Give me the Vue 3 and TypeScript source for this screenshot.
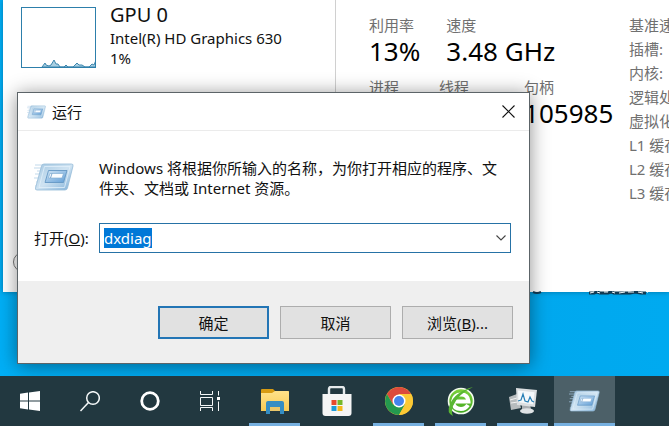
<script setup lang="ts">
import { onMounted, ref } from 'vue'

interface Stat {
  label: string
  value: string
}

const topStats: Stat[] = [
  { label: '利用率', value: '13%' },
  { label: '速度', value: '3.48 GHz' },
]
const lowerStats: Stat[] = [
  { label: '进程', value: '' },
  { label: '线程', value: '' },
  { label: '句柄', value: '105985' },
]
const details: string[] = ['基准速度:', '插槽:', '内核:', '逻辑处理器:', '虚拟化:', 'L1 缓存:', 'L2 缓存:', 'L3 缓存:']

const command = ref('dxdiag')
const field = ref<HTMLInputElement | null>(null)

onMounted(() => {
  field.value?.focus()
  field.value?.select()
})
</script>

<template>
  <div class="desktop">
    <svg class="defs" width="0" height="0" aria-hidden="true">
      <defs>
        <linearGradient id="run-face" x1="0" y1="0" x2="1" y2="1">
          <stop offset="0" stop-color="#a5c8e2" />
          <stop offset="0.5" stop-color="#cfe3f2" />
          <stop offset="1" stop-color="#7fb0d8" />
        </linearGradient>
        <linearGradient id="run-inner" x1="0" y1="0" x2="1" y2="1">
          <stop offset="0" stop-color="#d4e7f6" />
          <stop offset="1" stop-color="#5f9dd6" />
        </linearGradient>
        <linearGradient id="folder" x1="0" y1="0" x2="0" y2="1">
          <stop offset="0" stop-color="#ffe28a" />
          <stop offset="1" stop-color="#f8cb55" />
        </linearGradient>
        <linearGradient id="leaf" x1="0" y1="0" x2="0" y2="1">
          <stop offset="0" stop-color="#7fd43c" />
          <stop offset="1" stop-color="#3fa51f" />
        </linearGradient>
        <symbol id="run-icon" viewBox="0 0 40 28">
          <path d="M1 2h14M0 5h12M3 8h9M1 11h9M0 15h8M2 19h6M1 23h5" stroke="#a9cbe6" stroke-width="1.200" opacity=".7" />
          <path d="M10 1h27.500q2 0 1.500 2l-5.500 22q-.5 2-2.500 2H3q-2 0-1.500-2l6-22Q8 1 10 1z" fill="url(#run-face)" stroke="#96bbd8" stroke-width=".8" />
          <path d="M10.500 3.500H36l-5.500 21H5z" fill="none" stroke="#e2f0fa" stroke-width=".8" />
          <path d="M14.500 7.500H33l-3.500 12H11z" fill="url(#run-inner)" stroke="#6497c4" stroke-width=".9" />
          <path d="M16 10.500h13.500L28 15H14.500z" fill="#fafdff" stroke="#7aa7cf" stroke-width=".6" />
          <path d="M18 10.500L16.500 15" stroke="#6497c4" stroke-width=".8" />
        </symbol>
      </defs>
    </svg>

    <main class="workspace">
      <svg class="icon-label first-label" viewBox="0 0 12 5" aria-hidden="true">
        <path d="M2 1q4 2 8 0" fill="none" stroke="#123a52" stroke-width="2" />
      </svg>
      <svg class="icon-label second-label" viewBox="0 0 60 5" aria-hidden="true">
        <path d="M1 2h5l3-1 3 1h8l3-1 3 1h16l5-1 6 1h5" fill="none" stroke="#123a52" stroke-width="3" />
        <path d="M2 2l4-1m3 0l3 1m4-1h4m4 0l3 1m4 0l6-1m3 0h6m4 0l5 1m4-1l3 1" fill="none" stroke="#f2f8fb" />
      </svg>

      <section class="monitor" aria-label="GPU 0">
        <aside class="side">
          <svg class="graph" viewBox="0 0 75 61" aria-hidden="true">
            <path d="M21 60l3-4 1 2 3 1 2-1 3-5 2 4h2l2 3h4l2-2 2 2h5l4-4 2 2h3l3 2h4l3-3 2 1 2-5v7z" fill="#a9cfe2" stroke="#3e87ae" />
            <rect x=".5" y=".5" width="74" height="60" fill="none" stroke="#2d7fab" />
          </svg>
          <div class="gpu">
            <h2>GPU 0</h2>
            <p>Intel(R) HD Graphics 630</p>
            <p>1%</p>
          </div>
          <span class="fewer"></span>
        </aside>
        <div class="stats">
          <dl class="row top">
            <div v-for="s in topStats" :key="s.label">
              <dt>{{ s.label }}</dt>
              <dd>{{ s.value }}</dd>
            </div>
          </dl>
          <dl class="row lower">
            <div v-for="s in lowerStats" :key="s.label">
              <dt>{{ s.label }}</dt>
              <dd>{{ s.value }}</dd>
            </div>
          </dl>
        </div>
        <ul class="details">
          <li v-for="d in details" :key="d">{{ d }}</li>
        </ul>
      </section>

      <form class="dialog" role="dialog" aria-labelledby="run-title" @submit.prevent>
        <header class="titlebar">
          <svg class="small-run" aria-hidden="true"><use href="#run-icon" /></svg>
          <h1 id="run-title">运行</h1>
          <button type="button" class="close" aria-label="关闭">
            <svg viewBox="0 0 13 13" aria-hidden="true"><path d="M.5.5l12 12M12.500.5l-12 12" stroke="#111" stroke-width="1.100" /></svg>
          </button>
        </header>
        <div class="content">
          <div class="message">
            <svg class="large-run" aria-hidden="true"><use href="#run-icon" /></svg>
            <p>Windows 将根据你所输入的名称，为你打开相应的程序、文件夹、文档或 Internet 资源。</p>
          </div>
          <div class="entry">
            <label for="command">打开(<u>O</u>):</label>
            <div class="combo">
              <input id="command" ref="field" v-model="command" type="text" autocomplete="off" spellcheck="false" />
              <button type="button" aria-label="历史记录">
                <svg viewBox="0 0 10 6" aria-hidden="true"><path d="M.5.5L5 5 9.500.5" fill="none" stroke="#444" stroke-width="1.100" /></svg>
              </button>
            </div>
          </div>
        </div>
        <footer class="actions">
          <button type="submit" class="primary">确定</button>
          <button type="button">取消</button>
          <button type="button">浏览(<u>B</u>)...</button>
        </footer>
      </form>
    </main>

    <nav class="taskbar" aria-label="任务栏">
      <div class="system">
        <button type="button" aria-label="开始">
          <svg width="20" height="20" viewBox="0 0 20 20"><path d="M0 2.800l8-1.200v7.900H0zM9 1.400L20 0v9.500H9zM0 10.500h8v7.900l-8-1.200zM9 10.500h11V20L9 18.600z" fill="#fff" /></svg>
        </button>
        <button type="button" aria-label="搜索">
          <svg width="20" height="21" viewBox="0 0 20 21"><g fill="none" stroke="#f5f8f9" stroke-width="1.500"><circle cx="13" cy="7" r="6.300" /><path d="M8.500 11.500L.5 20" /></g></svg>
        </button>
        <button type="button" aria-label="Cortana">
          <svg width="20" height="20" viewBox="0 0 20 20"><circle cx="10" cy="10" r="8.300" fill="none" stroke="#fff" stroke-width="2.800" /></svg>
        </button>
        <button type="button" aria-label="任务视图">
          <svg width="20" height="20" viewBox="0 0 20 20"><path d="M.5 0v3.500h12V0M.5 6.500h12v8H.5zM.5 20v-3.500h12V20M18.500 0v4.500M18.500 10.500V20" fill="none" stroke="#f5f8f9" /><path d="M17 6h3v3h-3z" fill="#fff" /></svg>
        </button>
      </div>
      <div class="apps">
        <button type="button" class="running" aria-label="文件资源管理器">
          <svg width="28" height="25" viewBox="0 0 28 25"><path d="M0 1q0-1 1-1h11l2 2h13q1 0 1 1v5H0z" fill="#d79b13" /><path d="M0 4h11l3-2h13q1 0 1 1v19H0z" fill="url(#folder)" /><path d="M5 25V14q0-2 2-2h14q2 0 2 2v11h-4v-6H9v6z" fill="#358ec4" /><path d="M9 18h10v4H9z" fill="#e9c76a" /></svg>
        </button>
        <button type="button" aria-label="Microsoft Store">
          <svg width="30" height="30" viewBox="0 0 30 30"><path d="M7 10V3q0-2 2-2h11q2 0 2 2v7" fill="none" stroke="#e6eaec" stroke-width="2.400" /><path d="M.5 8h29v19q0 3-3 3h-23q-3 0-3-3z" fill="#f5f5f5" /><path d="M9.500 14h5v5h-5z" fill="#e8492d" /><path d="M15.500 14h5v5h-5z" fill="#76b82a" /><path d="M9.500 20h5v5h-5z" fill="#1f9bd8" /><path d="M15.500 20h5v5h-5z" fill="#f5b81c" /></svg>
        </button>
        <button type="button" class="running" aria-label="Chrome">
          <svg width="28" height="28" viewBox="0 0 28 28"><circle cx="14" cy="14" r="14" fill="#fcc934" /><path d="M14 7h12.100A14 14 0 0 0 1.900 7L8 17.500z" fill="#dc4a3d" /><path d="M1.900 7A14 14 0 0 0 14 28l6-10.500L8 17.500z" fill="#24994f" /><path d="M14 28a14 14 0 0 0 12.100-21H14l6 10.500z" fill="#fcc934" /><circle cx="14" cy="14" r="6.500" fill="#fff" /><circle cx="14" cy="14" r="5" fill="#4484ee" /></svg>
        </button>
        <button type="button" class="running" aria-label="浏览器">
          <svg width="30" height="30" viewBox="0 0 30 30"><circle cx="15" cy="15" r="12.500" fill="url(#leaf)" stroke="#f4fbef" stroke-width="1.600" /><path d="M7 15.500h15.500q-.5-7-7.500-7t-8 7q.5 7.500 8 7.500 4.500 0 7-4" fill="none" stroke="#fff" stroke-width="4" /><path d="M7 30Q0 27 4 18 9 6 27 1 12 8 7 20q-2 6 0 10z" fill="#5ab733" /></svg>
        </button>
        <button type="button" class="running" aria-label="任务管理器">
          <svg width="28" height="26" viewBox="0 0 28 26"><path d="M0 9l8-3 4 14-10 2z" fill="#b7bcbe" /><path d="M1 12l7-2M2 15l7-1" stroke="#f1f1f1" /><path d="M13 17h8l1 4H13z" fill="#a9adb0" /><ellipse cx="18" cy="23" rx="7" ry="2.800" fill="#dfe2e4" /><path d="M7 0l21 2-2 17-18-2z" fill="#dcdfe1" /><path d="M9 2.500l16.500 1.700-1.500 12-14.500-2z" fill="#f5f9fb" /><path d="M9 13l3-1 2-6 2 7 3 1 2-5 2 4 2 1" fill="none" stroke="#287fb5" stroke-width="1.200" /></svg>
        </button>
        <button type="button" class="running active" aria-label="运行">
          <svg width="31" height="22"><use href="#run-icon" /></svg>
        </button>
      </div>
    </nav>
  </div>
</template>

<style>
body {
  margin: 0;
}
</style>

<style scoped>
* {
  box-sizing: border-box;
}
.desktop {
  display: flex;
  flex-direction: column;
  min-height: 100vh;
  overflow: hidden;
  background: linear-gradient(90deg, #00aff6, #00a6ec 60%, #00aaf0);
  color: #111;
  font: 15px/20px 'Noto Sans', 'Noto Sans CJK SC', sans-serif;
}
.defs {
  position: absolute;
}
h1, h2, p, dl, dd, ul {
  margin: 0;
  padding: 0;
  font-weight: 400;
}
button {
  padding: 0;
  border: 0;
  background: none;
  color: inherit;
  font: inherit;
}
svg {
  display: block;
}
.workspace {
  position: relative;
  flex: 1;
  min-height: 376px;
  overflow: hidden;
}
.icon-label {
  position: absolute;
  z-index: 1;
  top: 291px;
  height: 5px;
}
.first-label {
  left: 531px;
  width: 12px;
}
.second-label {
  left: 588px;
  width: 60px;
}
.monitor {
  position: absolute;
  top: 0;
  left: 3px;
  right: 0;
  height: 292px;
  display: flex;
  overflow: hidden;
  background: #fff;
  box-shadow: 0 0 5px #00446688;
}
.side {
  display: flex;
  flex: none;
  align-items: flex-start;
  gap: 14px;
  width: 333px;
  padding: 7px 18px;
  border-right: 1px solid #d0d0d0;
}
.graph {
  width: 75px;
  height: 61px;
}
.gpu {
  margin-top: -5px;
}
.gpu h2 {
  font-size: 20px;
  line-height: 26px;
}
.fewer {
  position: absolute;
  left: 10px;
  top: 252px;
  width: 20px;
  height: 20px;
  border: 1px solid #777;
  border-radius: 50%;
}
.stats {
  flex: none;
  width: 293px;
  padding: 15px 0 0 33px;
}
.row {
  display: flex;
  height: 62px;
}
.top {
  gap: 26px;
}
.lower {
  gap: 40px;
}
.lower > div:last-child {
  margin-left: 15px;
}
.row > div {
  white-space: nowrap;
}
dt, .details {
  color: #707070;
}
dd {
  color: #000;
  font-size: 26px;
  line-height: 32px;
}
.details {
  white-space: nowrap;
  padding-top: 13px;
  line-height: 24px;
  list-style: none;
}
.dialog {
  position: absolute;
  z-index: 2;
  left: 17px;
  top: 92px;
  width: 513px;
  border: 1px solid #5c6468;
  background: #fff;
  box-shadow: 0 2px 18px #00000070;
}
.titlebar {
  display: flex;
  align-items: center;
  height: 38px;
  padding: 0 14px 0 9px;
  border-bottom: 1px solid #ebebeb;
}
.titlebar h1 {
  margin-left: 6px;
  font-size: 15px;
}
.small-run {
  width: 19px;
  height: 14px;
}
.close {
  margin-left: auto;
}
.close svg {
  width: 13px;
  height: 13px;
}
.content {
  height: 150px;
  padding: 27px 18px 0 16px;
}
.message {
  display: flex;
}
.message p {
  flex: 1;
}
.large-run {
  width: 40px;
  height: 28px;
  margin: 5px 25px 0 0;
}
.entry {
  display: flex;
  align-items: center;
  margin-top: 25px;
}
.entry label {
  flex: none;
  width: 65px;
  white-space: nowrap;
}
.combo {
  display: flex;
  flex: 1;
  align-items: center;
  height: 30px;
  padding: 0 4px;
  border: 1px solid #2672a6;
}
.combo input {
  flex: 1;
  min-width: 0;
  height: 20px;
  padding: 0;
  border: 0;
  outline: 0;
  background: none;
  color: #111;
  font: inherit;
}
.combo input::selection {
  background: #0078d7;
  color: #fff;
}
.combo svg {
  width: 10px;
  height: 6px;
}
.actions {
  display: flex;
  justify-content: flex-end;
  gap: 11px;
  height: 82px;
  padding: 25px 16px;
  background: #efefef;
}
.actions button {
  width: 111px;
  height: 33px;
  border: 1px solid #adadad;
  background: #e1e1e1;
}
.actions .primary {
  border: 2px solid #2375b5;
}
.taskbar {
  display: flex;
  flex: none;
  gap: 4px;
  height: 50px;
  background: #223840;
}
.system, .apps {
  display: flex;
}
.apps {
  gap: 1px;
}
.taskbar button {
  position: relative;
  display: grid;
  place-items: center;
  width: 60px;
  height: 50px;
}
.apps button {
  width: 61px;
}
.running::after {
  content: '';
  position: absolute;
  left: 5px;
  right: 5px;
  bottom: 0;
  height: 3px;
  background: #76b0e0;
}
.taskbar .active {
  background: #4c6068;
}
.active::after {
  left: 0;
  right: 0;
}
</style>
